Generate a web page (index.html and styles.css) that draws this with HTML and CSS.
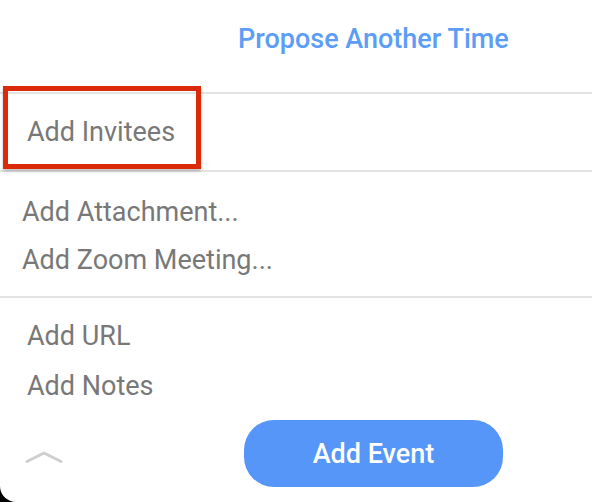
FILE: index.html
```html
<!DOCTYPE html>
<html>
<head>
<meta charset="utf-8">
<link rel="stylesheet" href="styles.css">
</head>
<body>
<div class="panel">
  <div class="header">
    <span class="link">Propose Another Time</span>
  </div>
  <div class="divider"></div>
  <div class="section invitees">
    <span class="item item-invitees">Add Invitees</span>
    <div class="highlight"></div>
  </div>
  <div class="divider"></div>
  <div class="section attach">
    <span class="item item-attach">Add Attachment...</span>
    <span class="item item-zoom">Add Zoom Meeting...</span>
  </div>
  <div class="divider"></div>
  <div class="section extra">
    <span class="item item-url">Add URL</span>
    <span class="item item-notes">Add Notes</span>
  </div>
  <div class="footer">
    <svg class="chevron" width="38" height="14" viewBox="0 0 38 14">
      <path d="M2 11.5 L19 3 L36 11.5" fill="none" stroke="#cfcfcf" stroke-width="3" stroke-linecap="round" stroke-linejoin="round"/>
    </svg>
    <button class="add-event">Add Event</button>
  </div>
</div>
</body>
</html>
```

FILE: styles.css
```css
html, body {
  margin: 0;
  padding: 0;
  background: #000;
}
body {
  width: 592px;
  height: 502px;
  overflow: hidden;
  font-family: Roboto, "Liberation Sans", sans-serif;
}
.panel {
  width: 592px;
  height: 502px;
  background: #fff;
  border-bottom-left-radius: 16px;
  display: flex;
  flex-direction: column;
  position: relative;
}
.header {
  height: 92px;
  display: flex;
  align-items: center;
  padding-left: 238px;
  box-sizing: border-box;
}
.link {
  color: #5c9df7;
  font-size: 27px;
  font-weight: 500;
  margin-top: -14px;
}
.divider {
  height: 2px;
  background: #e3e3e3;
}
.section {
  display: flex;
  flex-direction: column;
  position: relative;
}
.item {
  color: #787878;
  font-size: 27px;
  line-height: 48px;
}
.invitees {
  height: 76px;
  justify-content: center;
  padding-left: 27px;
  box-sizing: border-box;
}
.highlight {
  position: absolute;
  left: 3px;
  top: -8px;
  width: 198px;
  height: 83px;
  box-sizing: border-box;
  border: 5px solid #db2a0a;
  box-shadow: 0 2px 3px rgba(0, 0, 0, 0.25);
}
.attach {
  height: 124px;
  padding: 16px 0 0 22px;
  box-sizing: border-box;
}
.extra {
  padding: 13px 0 0 27px;
}
.item-url, .item-notes {
  line-height: 50px;
}
.footer {
  display: flex;
  align-items: center;
  padding: 9px 0 0 25px;
}
.chevron {
  margin-top: 6px;
}
.add-event {
  margin-left: 181px;
  width: 259px;
  height: 67px;
  border: none;
  border-radius: 30px;
  background: #5596f8;
  color: #fff;
  font-family: Roboto, "Liberation Sans", sans-serif;
  font-size: 27px;
  font-weight: 500;
  padding: 0;
}
```
